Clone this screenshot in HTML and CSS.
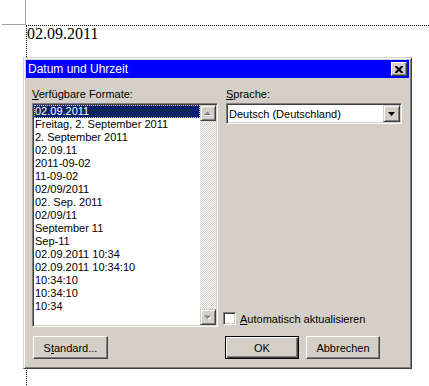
FILE: index.html
```html
<!DOCTYPE html>
<html lang="de">

<head>
    <meta charset="UTF-8">
    <meta name="viewport" content="width=device-width, initial-scale=1.0">
    <title>Datum und Uhrzeit</title>
    <link rel="stylesheet" href="styles.css">
</head>

<body>
    <div class="crop-mark"></div>
    <div class="text-area">
        <p class="doc-line">02.09.2011</p>
    </div>

    <div class="dialog">
        <div class="title-bar">
            <span class="title-text">Datum und Uhrzeit</span>
            <div class="close-button">
                <svg width="8" height="7" viewBox="0 0 8 7">
                    <path d="M0 0h2l2 2 2-2h2v1l-2.5 2.5 2.5 2.5v1h-2l-2-2-2 2h-2v-1l2.5-2.5-2.5-2.5z" fill="#000"/>
                </svg>
            </div>
        </div>

        <div class="dialog-body">
            <div class="field-label"><u>V</u>erfügbare Formate:</div>
            <div class="field-label"><u>S</u>prache:</div>

            <div class="listbox">
                <div class="list-items">
                    <div class="list-item selected">02.09.2011</div>
                    <div class="list-item">Freitag, 2. September 2011</div>
                    <div class="list-item">2. September 2011</div>
                    <div class="list-item">02.09.11</div>
                    <div class="list-item">2011-09-02</div>
                    <div class="list-item">11-09-02</div>
                    <div class="list-item">02/09/2011</div>
                    <div class="list-item">02. Sep. 2011</div>
                    <div class="list-item">02/09/11</div>
                    <div class="list-item">September 11</div>
                    <div class="list-item">Sep-11</div>
                    <div class="list-item">02.09.2011 10:34</div>
                    <div class="list-item">02.09.2011 10:34:10</div>
                    <div class="list-item">10:34:10</div>
                    <div class="list-item">10:34:10</div>
                    <div class="list-item">10:34</div>
                </div>
                <div class="scrollbar">
                    <div class="scroll-btn">
                        <svg width="8" height="5" viewBox="0 0 8 5">
                            <path d="M4.5 1.5l3.5 3.5h-7z" fill="#fff"/>
                            <path d="M3.5 0.5l3.5 3.5h-7z" fill="#808080"/>
                        </svg>
                    </div>
                    <div class="scroll-track"></div>
                    <div class="scroll-btn">
                        <svg width="8" height="5" viewBox="0 0 8 5">
                            <path d="M4.5 5l3.5-3.5h-7z" fill="#fff"/>
                            <path d="M3.5 4l3.5-3.5h-7z" fill="#808080"/>
                        </svg>
                    </div>
                </div>
            </div>

            <div class="right-pane">
                <div class="combo">
                    <span class="combo-text">Deutsch (Deutschland)</span>
                    <div class="combo-btn">
                        <svg width="7" height="4" viewBox="0 0 7 4">
                            <path d="M0 0h7l-3.5 4z" fill="#000"/>
                        </svg>
                    </div>
                </div>
                <div class="check-row">
                    <div class="checkbox"></div>
                    <span><u>A</u>utomatisch aktualisieren</span>
                </div>
            </div>

            <div class="button-row">
                <div class="push-button standard-btn">S<u>t</u>andard...</div>
            </div>
            <div class="button-row">
                <div class="push-button default-btn">OK</div>
                <div class="push-button">Abbrechen</div>
            </div>
        </div>
    </div>
</body>

</html>
```

FILE: styles.css
```css
body {
    margin: 0;
    background-color: #fff;
    font-family: "Liberation Sans", Arial, sans-serif;
    font-size: 11px;
    overflow: hidden;
}

/* page corner + text boundary of the document */
.crop-mark {
    margin-left: 2px;
    width: 23px;
    height: 24px;
    border-right: 1px solid #a0a0a0;
    border-bottom: 1px solid #a0a0a0;
}

.text-area {
    margin-left: 26px;
    height: 361px;
    border-top: 1px dotted #000;
    border-left: 1px dotted #000;
}

.doc-line {
    margin: 0;
    font-family: "Liberation Serif", "Times New Roman", serif;
    font-size: 16px;
    line-height: 16px;
    color: #000;
}

/* dialog window floating over the document */
.dialog {
    position: absolute;
    left: 23px;
    top: 57px;
    width: 389px;
    height: 312px;
    box-sizing: border-box;
    background-color: #d4d0c8;
    border: 1px solid;
    border-color: #d4d0c8 #404040 #404040 #d4d0c8;
    box-shadow: inset 1px 1px #fff, inset -1px -1px #808080;
    padding: 2px;
}

.title-bar {
    height: 18px;
    background-color: #0000ff;
    color: #fff;
    display: flex;
    align-items: center;
    justify-content: space-between;
    padding-left: 2px;
}

.title-text {
    font-size: 12px;
}

.close-button {
    width: 16px;
    height: 14px;
    box-sizing: border-box;
    margin-right: 2px;
    background-color: #d4d0c8;
    border: 1px solid;
    border-color: #fff #404040 #404040 #fff;
    box-shadow: inset -1px -1px #808080;
    display: flex;
    align-items: center;
    justify-content: center;
}

.dialog-body {
    display: grid;
    grid-template-columns: 186px 176px;
    column-gap: 8px;
    padding: 10px 0 0 6px;
    color: #000;
}

.field-label {
    line-height: 13px;
    margin-bottom: 2px;
}

.listbox {
    height: 224px;
    box-sizing: border-box;
    background-color: #fff;
    border: 1px solid;
    border-color: #808080 #fff #fff #808080;
    box-shadow: inset 1px 1px #404040, inset -1px -1px #d4d0c8;
    padding: 1px;
    display: flex;
}

.list-items {
    flex: 1;
}

.list-item {
    line-height: 13px;
    height: 13px;
    padding-left: 1px;
    white-space: nowrap;
}

.list-item.selected {
    background-color: #0a246a;
    color: #fff;
    outline: 1px dotted #e8d890;
    outline-offset: -1px;
}

.scrollbar {
    width: 16px;
    display: flex;
    flex-direction: column;
}

.scroll-btn {
    height: 16px;
    box-sizing: border-box;
    background-color: #d4d0c8;
    border: 1px solid;
    border-color: #d4d0c8 #404040 #404040 #d4d0c8;
    box-shadow: inset 1px 1px #fff, inset -1px -1px #808080;
    display: flex;
    align-items: center;
    justify-content: center;
}

.scroll-track {
    flex: 1;
    background: repeating-conic-gradient(#d4d0c8 0 25%, #fff 0 50%) 0 0 / 2px 2px;
}

.right-pane {
    display: flex;
    flex-direction: column;
    justify-content: space-between;
}

.combo {
    height: 21px;
    box-sizing: border-box;
    background-color: #fff;
    border: 1px solid;
    border-color: #808080 #fff #fff #808080;
    box-shadow: inset 1px 1px #404040, inset -1px -1px #d4d0c8;
    padding: 1px;
    display: flex;
    align-items: center;
}

.combo-text {
    flex: 1;
    padding-left: 1px;
}

.combo-btn {
    width: 17px;
    height: 17px;
    box-sizing: border-box;
    background-color: #d4d0c8;
    border: 1px solid;
    border-color: #d4d0c8 #404040 #404040 #d4d0c8;
    box-shadow: inset 1px 1px #fff, inset -1px -1px #808080;
    display: flex;
    align-items: center;
    justify-content: center;
}

.check-row {
    display: flex;
    align-items: center;
    gap: 4px;
    margin-left: -3px;
    margin-bottom: 2px;
}

.checkbox {
    width: 13px;
    height: 13px;
    box-sizing: border-box;
    background-color: #fff;
    border: 1px solid;
    border-color: #808080 #fff #fff #808080;
    box-shadow: inset 1px 1px #404040, inset -1px -1px #d4d0c8;
}

.button-row {
    display: flex;
    gap: 7px;
    margin-top: 9px;
}

.push-button {
    width: 74px;
    height: 23px;
    box-sizing: border-box;
    background-color: #d4d0c8;
    border: 1px solid;
    border-color: #fff #404040 #404040 #fff;
    box-shadow: inset -1px -1px #808080;
    display: flex;
    align-items: center;
    justify-content: center;
}

.standard-btn {
    margin-left: 1px;
    width: 75px;
}

.default-btn {
    margin-left: -1px;
    border: 1px solid #000;
    box-shadow: inset 1px 1px #fff, inset -1px -1px #404040, inset -2px -2px #808080;
}
```
